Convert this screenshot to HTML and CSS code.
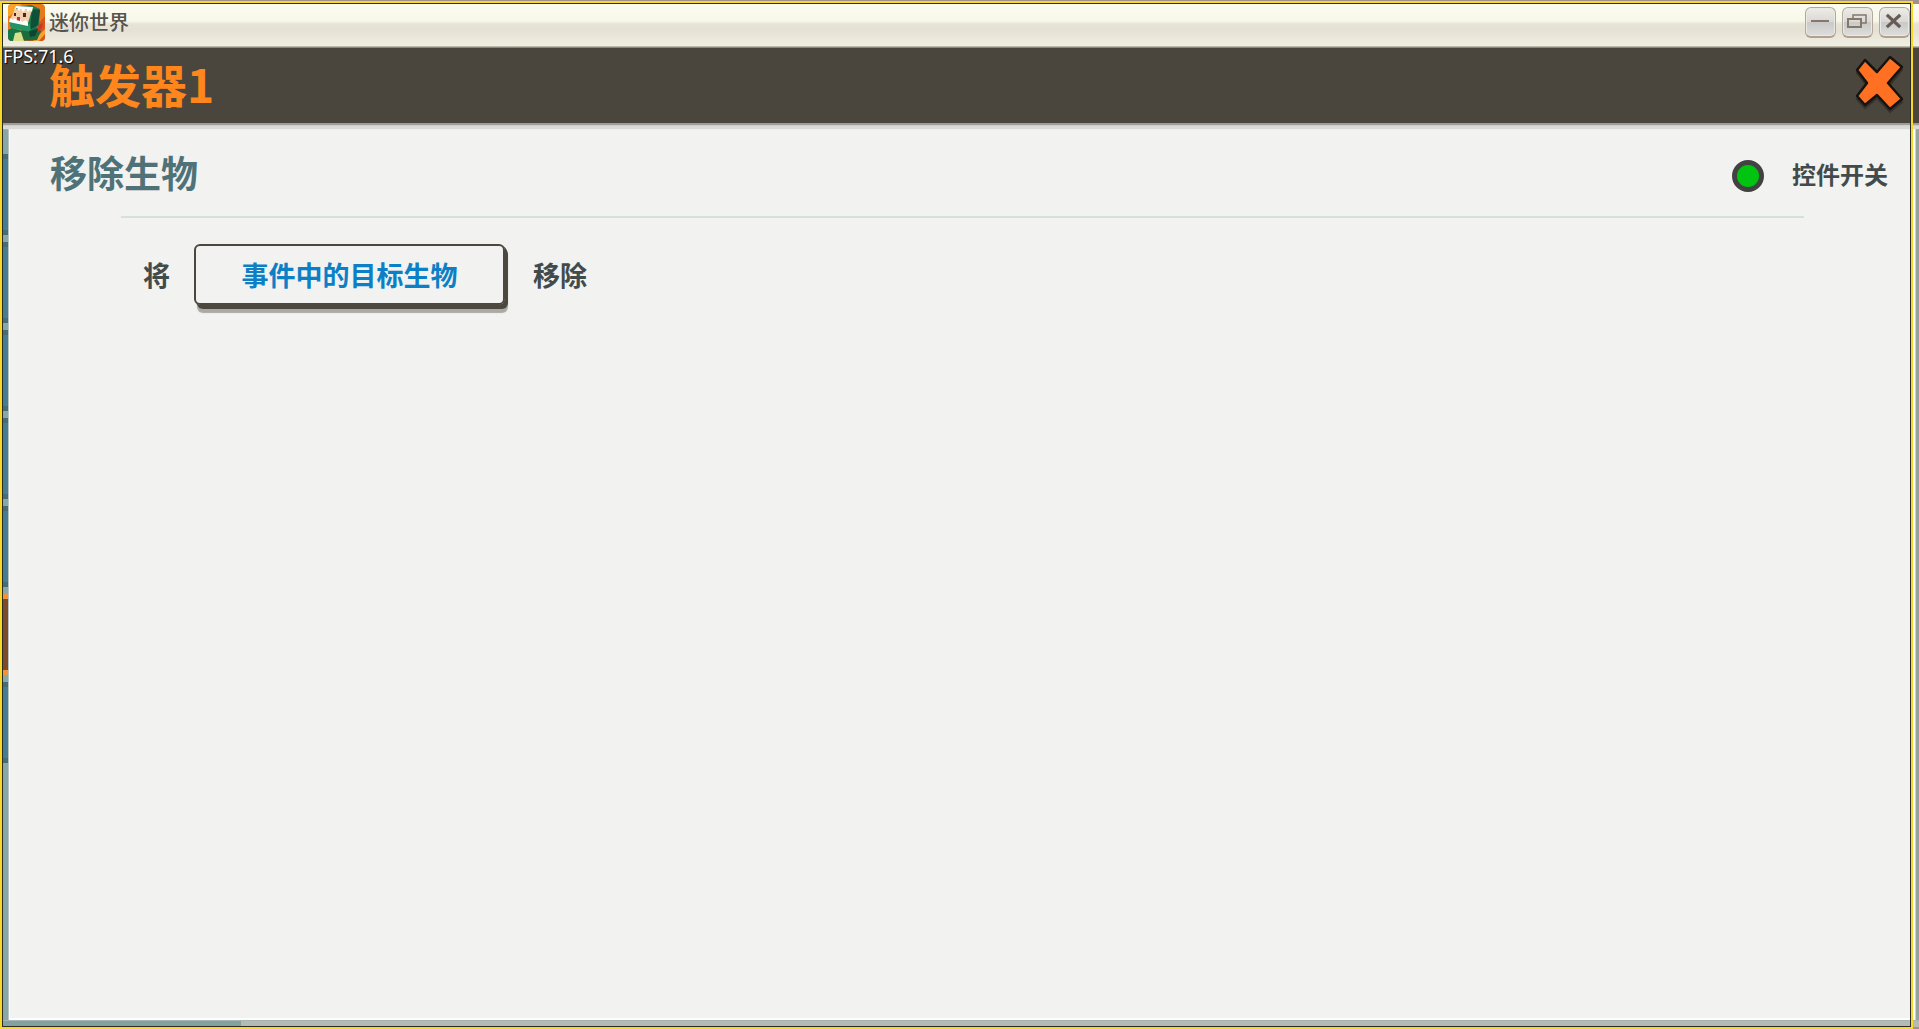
FILE: index.html
```html
<!DOCTYPE html>
<html lang="zh-CN">
<head>
<meta charset="utf-8">
<title>迷你世界</title>
<link rel="stylesheet" href="styles.css">
</head>
<body>
<div class="window">
  <div class="titlebar">
    <svg class="app-icon" viewBox="0 0 37 37" aria-hidden="true">
      <defs><clipPath id="app-clip"><rect width="37" height="37" rx="4"/></clipPath></defs>
      <g clip-path="url(#app-clip)">
        <rect width="37" height="37" fill="#e8791b"/>
        <path d="M0 0h14L2 12H0z" fill="#f7a32c"/>
        <path d="M28 22l9-10v25H20z" fill="#d9541b"/>
        <path d="M25 37l12-12v5l-6 7z" fill="#f6a331"/>
        <path d="M4 24l-4 2v11h12l6-9z" fill="#14764a"/>
        <path d="M14 26l14-3 5 4-4 9-20 1z" fill="#1b6b3d"/>
        <path d="M7 29l6-1 3 9H5z" fill="#d9e08a"/>
        <path d="M8 3L23 1l9 4-1 16-8 6-21-5z" fill="#1d7b4e"/>
        <path d="M24 5l8 1-2 15-8 5z" fill="#0f5138"/>
        <path d="M1 17l21 3 1 8-20-4z" fill="#249462"/>
        <path d="M7 5l17 1-4 13-18-3z" fill="#f3cfae"/>
        <path d="M8 2l17 1-1 5-2-2-2 2-2-3-3 3-2-3-2 2-2-3-3 2z" fill="#fff"/>
        <path d="M2 14l3 2 2-2 2 3 3-2 2 3 4-2 2 3v3L1 18z" fill="#fff"/>
        <path d="M6 9h2v3H6zM15 9h3v4h-3z" fill="#4a2523"/>
        <path d="M9 13l3 0 0 4-3-1z" fill="#c32d2c"/>
        <path d="M21 27l9-2-3 7-5 1z" fill="#0c4630"/>
        <path d="M30 21l5-2-1 5-4 4z" fill="#c93b25"/>
      </g>
    </svg>
    <span class="app-name">迷你世界</span>
    <div class="window-buttons">
      <button class="window-button" type="button" aria-label="最小化">
        <svg viewBox="0 0 29 28"><path d="M5 13h18" stroke="#85776a" stroke-width="2"/></svg>
      </button>
      <button class="window-button" type="button" aria-label="还原">
        <svg viewBox="0 0 29 28" fill="none" stroke="#85776a" stroke-width="2"><path d="M5 11h13v8H5z"/><path d="M10 10V7h13v8h-4" stroke-width="1.5"/></svg>
      </button>
      <button class="window-button" type="button" aria-label="关闭">
        <svg viewBox="0 0 29 28"><path d="M8 8l11 10M19 8L8 18" stroke="#685b55" stroke-width="3.2" stroke-linecap="square"/></svg>
      </button>
    </div>
  </div>

  <header class="header">
    <h1 class="header-title">触发器1</h1>
    <button class="header-close" type="button" aria-label="关闭触发器">
      <svg viewBox="0 0 54 62" aria-hidden="true">
        <path d="M13 8L25 20 38 5 50 15 37 31 50 47 38 57 25 43 13 53 5 44 15 31 5 18z" fill="#282520" stroke="#282520" stroke-width="2" opacity=".6" transform="translate(0 3)"/>
        <path d="M13 8L25 20 38 5 50 15 36 31 50 47 38 57 25 43 13 53 5 44 15 31 5 18z" fill="#ff7022" stroke="#17130f" stroke-width="2.5" stroke-linejoin="round"/>
      </svg>
    </button>
    <output class="fps">FPS:71.6</output>
  </header>

  <div class="workspace">
    <div class="rail">
      <span class="rail-item"></span>
      <span class="rail-item"></span>
      <span class="rail-item"></span>
      <span class="rail-item"></span>
      <span class="rail-item"></span>
      <span class="rail-item rail-item-active"></span>
      <span class="rail-item"></span>
    </div>
    <main class="panel">
      <div class="panel-head">
        <h2 class="panel-title">移除生物</h2>
        <div class="switch">
          <input class="switch-input" id="control-switch" type="checkbox" checked>
          <label class="switch-label" for="control-switch">控件开关</label>
        </div>
      </div>
      <hr class="divider">
      <div class="sentence">
        <span>将</span>
        <button class="param" type="button">事件中的目标生物</button>
        <span>移除</span>
      </div>
    </main>
    <div class="edge"></div>
  </div>
  <div class="bottom-strip"></div>
  <div class="capture-frame"></div>
</div>
</body>
</html>
```
FILE: styles.css
```css
* {
  box-sizing: border-box;
}

body {
  margin: 0;
  font-family: "Noto Sans CJK SC", sans-serif;
}

button {
  padding: 0;
  border: 0;
  background: none;
  font: inherit;
}

svg {
  display: block;
}

.window {
  position: relative;
  display: flex;
  flex-direction: column;
  min-height: 100vh;
  padding: 4px 0 2px 3px;
  background: #a39189;
}

/* System title bar */
.titlebar {
  display: flex;
  align-items: center;
  height: 44px;
  padding: 0 9px 8px 5px;
  background: linear-gradient(#fbfcf0 0, #f8f8e9 17px, #e7e3d8 20px, #e6e1d5 26px, #f0efe2 42px, #8a8a72 43px);
}

.app-icon {
  width: 37px;
  height: 37px;
}

.app-name {
  margin-left: 4px;
  font-size: 20px;
  font-weight: 500;
  line-height: 36px;
  color: #57534e;
}

.window-buttons {
  display: flex;
  gap: 6px;
  margin-left: auto;
}

.window-button {
  width: 31px;
  height: 31px;
  border: 1px solid #b2a99e;
  border-bottom: 2px solid #b29f90;
  border-radius: 6px;
  background: linear-gradient(#eeece7, #d9d8d5 50%, #c9c9c9 52%, #dededc);
  box-shadow: inset 0 0 0 1px #ebe9e4;
}

/* Trigger header */
.header {
  position: relative;
  z-index: 1;
  display: flex;
  align-items: center;
  justify-content: space-between;
  height: 75px;
  padding: 0 13px 6px 46px;
  background: #4a463e;
  box-shadow: 0 2px 1px #9f9d99, 0 6px 1px #d9d9d8;
}

.header-title {
  margin: 0;
  font-size: 46px;
  font-weight: 700;
  line-height: 68px;
  color: #ff861c;
}

.header-close svg {
  width: 54px;
  height: 62px;
}

.fps {
  position: absolute;
  top: -3px;
  left: 0;
  font-family: "Noto Sans", sans-serif;
  font-size: 18px;
  line-height: 22px;
  color: #fff;
  text-shadow: 1px 1px 1px #000;
}

/* Work area */
.workspace {
  display: flex;
  flex: 1;
}

.rail {
  display: flex;
  flex-direction: column;
  gap: 7px;
  width: 6px;
  padding-top: 31px;
  border-right: 1px solid #b8c4c3;
  background: #87a8a6;
}

.rail-item {
  height: 81px;
  border: solid #456c77;
  border-width: 5px 0;
  background: #467d91;
}

.rail-item-active {
  border-color: #f79233;
  background: #7d4a2a;
}

.panel {
  flex: 1;
  border: solid #fdfdfc;
  border-width: 0 2px 2px 1px;
  background: #f2f2f0;
}

.edge {
  width: 4px;
  border-left: 1px solid #cbd1ce;
  background: #92a69f;
}

.bottom-strip {
  height: 7px;
  border-top: 1px solid #a4b5b3;
  background: linear-gradient(90deg, #83a19f 238px, #b5bab3 238px);
}

.panel-head {
  display: flex;
  align-items: flex-start;
  justify-content: space-between;
  height: 93px;
  padding: 21px 25px 0 40px;
}

.panel-title {
  margin: 0;
  font-size: 37px;
  font-weight: 700;
  line-height: 56px;
  color: #4e7277;
}

.switch {
  display: flex;
  align-items: center;
  gap: 28px;
  padding-top: 12px;
  font-size: 25px;
  font-weight: 700;
  line-height: 36px;
  color: #424b4c;
}

.switch-label {
  padding-bottom: 4px;
  font-size: 24px;
  line-height: 36px;
}

.switch-input {
  width: 32px;
  height: 32px;
  margin: 0;
  appearance: none;
  border: 5px solid #424242;
  border-radius: 50%;
  background: #d44;
}

.switch-input:checked {
  background: #00c510;
}

.divider {
  height: 2px;
  margin: 0 109px 0 111px;
  border: 0;
  background: #d3e1d9;
}

.sentence {
  display: flex;
  align-items: center;
  gap: 24px;
  padding: 26px 133px 0;
  font-size: 27px;
  font-weight: 700;
  line-height: 40px;
  color: #424b4c;
}

.param {
  width: 311px;
  height: 61px;
  margin-right: 4px;
  border: 2px solid #4c483f;
  border-radius: 6px;
  color: #0c80c6;
  box-shadow: 1px 1px 0 #4c483f, 2px 2px 0 #4c483f, 3px 4px 0 #4c483f, 3px 8px 1px #aaa9a6;
}

/* Capture selection outline */
.capture-frame {
  position: absolute;
  inset: 1px 6px 0 0;
  border: 2px solid #f8d929;
  outline: 1px solid #2c2c22;
  outline-offset: -3px;
  pointer-events: none;
  z-index: 2;
}
```
